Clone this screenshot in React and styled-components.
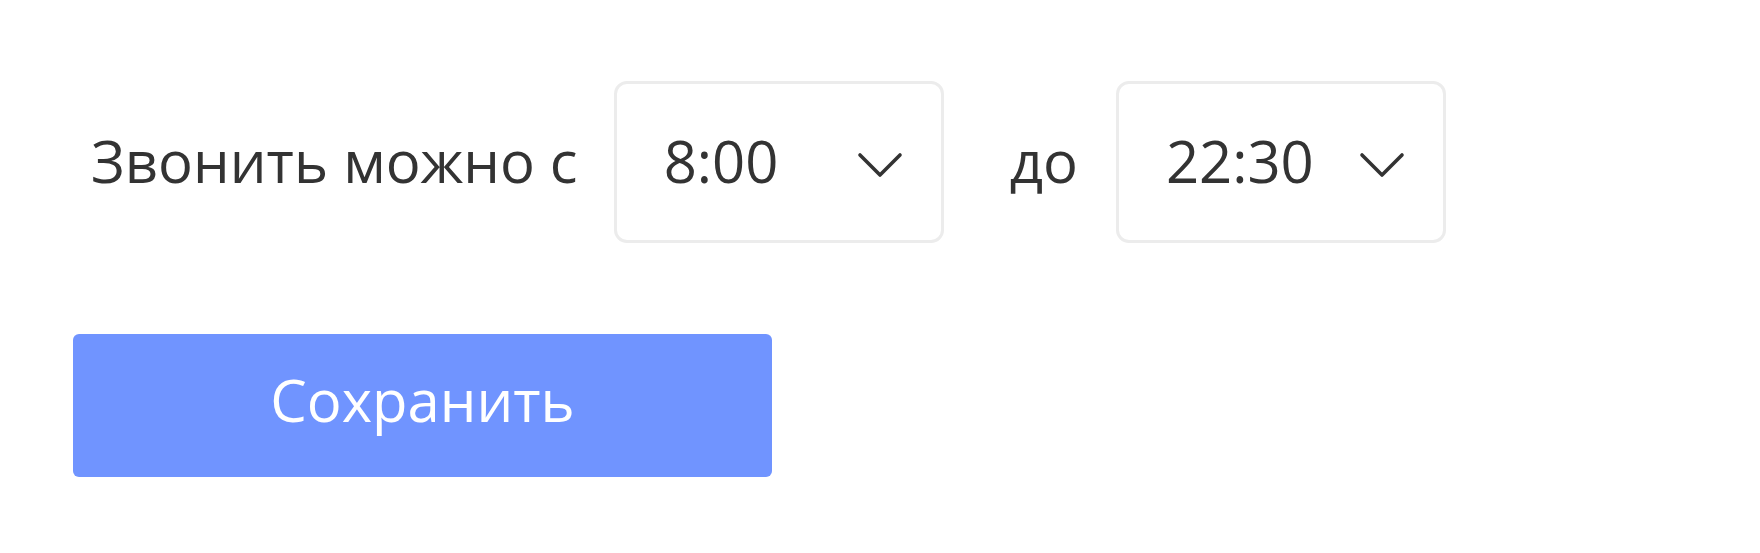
import React from "react";
import styled, { createGlobalStyle } from "styled-components";

const Global = createGlobalStyle`
  html, body { margin: 0; padding: 0; background: #fff; }
  body { font-family: "Open Sans", "Noto Sans", sans-serif; color: #333; }
`;

const Page = styled.div`
  display: flex;
  flex-direction: column;
  align-items: flex-start;
  padding: 81px 0 0 73px;
  gap: 91px;
`;

const Row = styled.div`
  display: flex;
  align-items: center;
`;

const Label = styled.span`
  font-size: 58px;
  line-height: 1;
  padding-bottom: 3px;
  color: #333;
  margin: ${(p) => p.$margin || "0"};
  white-space: nowrap;
`;

const Select = styled.div`
  box-sizing: border-box;
  width: 330px;
  height: 162px;
  border: 3px solid #ececec;
  border-radius: 13px;
  background: #fff;
  display: flex;
  align-items: center;
  justify-content: space-between;
  padding: 0 38px 0 47px;
  font-size: 58px;
  color: #333;
`;

const Value = styled.span`
  line-height: 1;
  padding-bottom: 3px;
`;

const Chevron = styled.svg`
  width: 46px;
  height: 28px;
  margin-top: 4px;
  flex: none;
`;

const Button = styled.button`
  box-sizing: border-box;
  width: 699px;
  height: 143px;
  border: none;
  border-radius: 6px;
  background: #7094ff;
  color: #fff;
  font-family: "Open Sans", "Noto Sans", sans-serif;
  font-size: 58px;
  display: flex;
  align-items: center;
  justify-content: center;
  padding: 0 0 12px;
  cursor: pointer;
`;

const ChevronIcon = () => (
  <Chevron viewBox="0 0 46 28">
    <polyline
      points="3,5 23,25 43,5"
      fill="none"
      stroke="#333"
      strokeWidth="3.6"
      strokeLinecap="round"
      strokeLinejoin="round"
    />
  </Chevron>
);

const TimeSelect = ({ value }) => (
  <Select>
    <Value>{value}</Value>
    <ChevronIcon />
  </Select>
);

export default function App() {
  return (
    <>
      <Global />
      <Page>
        <Row>
          <Label $margin="0 36px 0 18px">Звонить можно с</Label>
          <TimeSelect value="8:00" />
          <Label $margin="0 38px 0 66px">до</Label>
          <TimeSelect value="22:30" />
        </Row>
        <Button>Сохранить</Button>
      </Page>
    </>
  );
}
